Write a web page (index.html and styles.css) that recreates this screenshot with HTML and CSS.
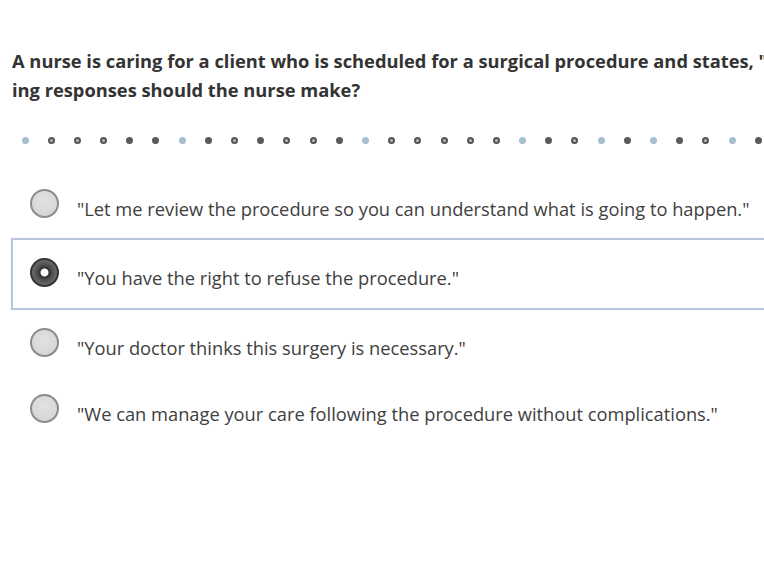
FILE: index.html
```html
<!DOCTYPE html>
<html>
<head>
<meta charset="utf-8">
<link rel="stylesheet" href="styles.css">
</head>
<body>
<div class="page">
  <div class="question">
    <div class="qline">A nurse is caring for a client who is scheduled for a surgical procedure and states, "</div>
    <div class="qline">ing responses should the nurse make?</div>
  </div>
  <div class="dots">
    <span class="dot blue"></span><span class="dot ring"></span><span class="dot ring"></span><span class="dot ring"></span><span class="dot solid"></span><span class="dot solid"></span><span class="dot blue"></span><span class="dot solid"></span><span class="dot ring"></span><span class="dot solid"></span><span class="dot ring"></span><span class="dot ring"></span><span class="dot solid"></span><span class="dot blue"></span><span class="dot ring"></span><span class="dot ring"></span><span class="dot ring"></span><span class="dot ring"></span><span class="dot ring"></span><span class="dot blue"></span><span class="dot solid"></span><span class="dot ring"></span><span class="dot blue"></span><span class="dot solid"></span><span class="dot blue"></span><span class="dot solid"></span><span class="dot ring"></span><span class="dot blue"></span><span class="dot solid"></span>
  </div>
  <div class="options">
    <div class="option"><span class="radio"></span><span class="label">"Let me review the procedure so you can understand what is going to happen."</span></div>
    <div class="option selected"><span class="radio checked"></span><span class="label">"You have the right to refuse the procedure."</span></div>
    <div class="option short"><span class="radio"></span><span class="label">"Your doctor thinks this surgery is necessary."</span></div>
    <div class="option"><span class="radio"></span><span class="label">"We can manage your care following the procedure without complications."</span></div>
  </div>
</div>
</body>
</html>
```
FILE: styles.css
```css
html, body {
  margin: 0;
  padding: 0;
  background: #ffffff;
}
body {
  width: 764px;
  height: 574px;
  overflow: hidden;
  font-family: "Open Sans", "Liberation Sans", sans-serif;
}
.page {
  padding-top: 46px;
}
.question {
  padding-left: 12px;
  font-size: 18.3px;
  font-weight: 700;
  line-height: 29px;
  color: #333333;
}
.qline {
  white-space: nowrap;
}
.dots {
  display: flex;
  align-items: center;
  gap: 19.2px;
  padding-left: 21.5px;
  height: 14px;
  margin-top: 29px;
  white-space: nowrap;
}
.dot {
  flex: none;
  width: 7px;
  height: 7px;
  border-radius: 50%;
  box-sizing: border-box;
}
.dot.blue { background: #a3c0cf; }
.dot.solid { background: #5a5a5a; }
.dot.ring { background: #b8b8b8; border: 2.4px solid #555555; }
.options {
  margin-top: 22px;
}
.option {
  display: flex;
  align-items: center;
  height: 68px;
  box-sizing: border-box;
  margin-left: 11px;
  border: 2px solid transparent;
  border-right: none;
  padding-left: 17px;
  font-size: 18.3px;
  color: #404040;
  white-space: nowrap;
}
.option.selected {
  height: 72px;
  margin-top: 1px;
  border-color: #b7c6dd;
  box-shadow: 0 0 1px #d0dbe9;
  padding-bottom: 3px;
}
.option.short {
  height: 64px;
}
.label {
  padding-top: 10px;
}
.radio {
  flex: none;
  width: 29px;
  height: 29px;
  box-sizing: border-box;
  border-radius: 50%;
  border: 2px solid #8c8c8c;
  background: radial-gradient(circle at 50% 40%, #e2e2e2 0%, #d2d2d2 100%);
  margin-right: 18px;
}
.radio.checked {
  border: 2px solid #333333;
  background: radial-gradient(circle, #ffffff 0, #ffffff 3.5px, #2e2e2e 4.5px, #4a4a4a 40%, #8a8a8a 100%);
}
```
